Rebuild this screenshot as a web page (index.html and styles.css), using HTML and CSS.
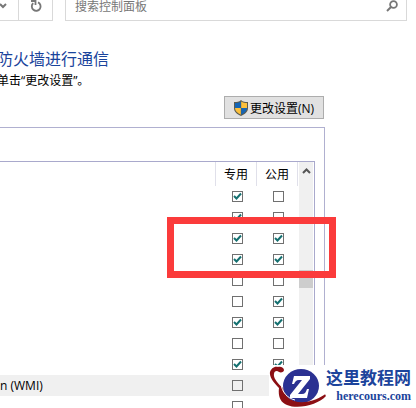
FILE: index.html
```html
<!DOCTYPE html>
<html lang="zh-CN">
<head>
<meta charset="UTF-8">
<title>允许应用通过防火墙进行通信</title>
<link rel="stylesheet" href="styles.css">
</head>
<body>
<header class="toolbar">
<div class="nav">
<button class="nav-btn drop" aria-label="历史">
<svg width="8" height="6" viewBox="0 0 8 6"><path d="M0 1l3 3 3-3" fill="none" stroke="#777" stroke-width="2"/></svg>
</button>
<button class="nav-btn refresh" aria-label="刷新">
<svg width="12" height="14" viewBox="0 0 12 14"><path d="M8 3.400A4.400 4.400 0 1 1 3.200 4.200M1 2h4.500v4" fill="none" stroke="#777" stroke-width="1.800"/></svg>
</button>
</div>
<div class="search">
<input type="text" placeholder="搜索控制面板" aria-label="搜索控制面板">
<svg width="12" height="12" viewBox="0 0 12 12"><circle cx="7.500" cy="4.500" r="3.400" fill="none" stroke="#777" stroke-width="1.800"/><path d="M5 7L1 11" stroke="#777" stroke-width="2"/></svg>
</div>
</header>
<main class="page">
<h1>防火墙进行通信</h1>
<p class="hint">单击“更改设置”。</p>
<div class="actions">
<button class="change-btn">
<svg width="14" height="16" viewBox="0 0 14 16">
<path d="M7 0C5 2 3 2 0 2v6c0 4 3 6 7 8 4-2 7-4 7-8V2C11 2 9 2 7 0z" fill="#5c5c50"/>
<path d="M6.800 1.500C5 3 3 3 1 3v5h5.800z" fill="#1565b4"/>
<path d="M7.200 1.500C9 3 11 3 13 3v5H7.200z" fill="#fcc03c"/>
<path d="M1 8h5.800v6.700C3 13 1 11 1 8z" fill="#fcc03c"/>
<path d="M13 8H7.200v6.700C11 13 13 11 13 8z" fill="#1565b4"/>
</svg>
<span>更改设置(N)</span>
</button>
</div>
<section class="panel">
<div class="list">
<table>
<thead>
<tr><th class="name"></th><th>专用</th><th>公用</th></tr>
</thead>
<tbody>
<tr><td></td><td><input type="checkbox" aria-label="专用" checked></td><td><input type="checkbox" aria-label="公用"></td></tr>
<tr><td></td><td><input type="checkbox" aria-label="专用" checked></td><td><input type="checkbox" aria-label="公用"></td></tr>
<tr><td></td><td><input type="checkbox" aria-label="专用" checked></td><td><input type="checkbox" aria-label="公用" checked></td></tr>
<tr><td></td><td><input type="checkbox" aria-label="专用" checked></td><td><input type="checkbox" aria-label="公用" checked></td></tr>
<tr><td></td><td><input type="checkbox" aria-label="专用"></td><td><input type="checkbox" aria-label="公用"></td></tr>
<tr><td></td><td><input type="checkbox" aria-label="专用"></td><td><input type="checkbox" aria-label="公用" checked></td></tr>
<tr><td></td><td><input type="checkbox" aria-label="专用" checked></td><td><input type="checkbox" aria-label="公用" checked></td></tr>
<tr><td></td><td><input type="checkbox" aria-label="专用"></td><td><input type="checkbox" aria-label="公用"></td></tr>
<tr><td></td><td><input type="checkbox" aria-label="专用" checked></td><td><input type="checkbox" aria-label="公用" checked></td></tr>
<tr class="selected"><td><label for="wmi">n (WMI)</label></td><td><input type="checkbox" id="wmi"></td><td><input type="checkbox" aria-label="公用"></td></tr>
<tr><td></td><td><input type="checkbox" aria-label="专用"></td><td><input type="checkbox" aria-label="公用"></td></tr>
</tbody>
</table>
<div class="scrollbar">
<svg width="9" height="6" viewBox="0 0 9 6"><path d="M1 5l3.500-3.500L8 5" fill="none" stroke="#555" stroke-width="2"/></svg>
<div class="thumb"></div>
</div>
</div>
<div class="mark"></div>
</section>
</main>
<footer class="logo">
<svg width="60" height="43" viewBox="0 0 60 43">
<ellipse cx="32" cy="21" rx="18" ry="17" fill="#2b3192"/>
<path d="M14 3C9 0 4 2 2 6c-2 6 4 12 9 17" fill="none" stroke="#fff" stroke-width="1"/>
<path d="M9 2C5 1 2 4 1 7c-1 6 5 12 9 16-1 8 1 14 8 17 12 5 32-1 39-9-1-1 0-2-2-1-9 6-21 9-30 6-6-2-10-7-11-13C9 19 4 13 5 9c0-3 3-4 5-2 2 1 5 0 5-2s-3-4-6-3z" fill="#8c0f14"/>
<path d="M12 19c1 8 6 14 14 16" fill="none" stroke="#fff" stroke-width="1"/>
<path d="M25 11h16v3L29 29h4c3 0 4-2 5-5h2l-2 9H21v-3l12-15h-3c-3 0-4 2-5 4h-2z" fill="#fff"/>
</svg>
<div class="logo-text">
<strong>这里教程网</strong>
<span>herecours.com</span>
</div>
</footer>
</body>
</html>
```

FILE: styles.css
```css
*{box-sizing:border-box;}
body{margin:0;height:100vh;overflow:hidden;position:relative;background:#fff;color:#000;
font-family:"Open Sans","Noto Sans CJK SC",sans-serif;font-size:12px;}
button,input{font:inherit;color:inherit;margin:0;}

.toolbar{display:flex;gap:12px;height:21px;padding-right:9px;}
.nav{display:flex;border-bottom:1px solid #d9d9d9;}
.nav-btn{display:flex;align-items:center;border:0;border-right:1px solid #d9d9d9;background:none;padding:0 0 8px;}
.drop{width:19px;}
.refresh{width:34px;justify-content:center;}
.search{flex:1;display:flex;align-items:flex-start;border:1px solid #d9d9d9;border-top:0;padding-right:8px;}
.search input{flex:1;min-width:0;height:12px;line-height:12px;border:0;padding:0 0 0 9px;background:none;outline:none;}
.search input::placeholder{color:#777;}

.page{padding-right:91px;}
h1{margin:26px 0 0 -3px;font-size:16px;line-height:24px;font-weight:400;color:#1a449c;}
.hint{margin:0 0 0 -3px;line-height:20px;}
.actions{display:flex;justify-content:flex-end;margin-top:5px;padding-right:1px;}
.change-btn{display:flex;align-items:center;justify-content:center;gap:2px;width:100px;height:23px;
padding:0;border:1px solid #adadad;background:#e1e1e1;white-space:nowrap;}

.panel{position:relative;margin-top:8px;padding:33px 9px 20px 0;border:1px solid #b0b0d0;border-left:0;}
.list{display:flex;border:1px solid #a9a9cc;border-left:0;}
table{flex:1;table-layout:fixed;border-collapse:collapse;}
th{width:41px;height:24px;padding:0;font-weight:400;border-right:1px solid #e0e0ea;}
th.name{width:auto;}
td{height:21px;padding:0 0 0 2px;line-height:20px;text-align:center;}
td:first-child{padding:0;text-align:left;}
.selected{background:#f0f0f0;}
td input{appearance:none;display:block;width:11px;height:11px;margin:0 auto;border:1px solid #707070;
background:transparent center no-repeat;}
td input:checked{background-image:url("data:image/svg+xml,%3Csvg xmlns='http://www.w3.org/2000/svg' width='9' height='9'%3E%3Cpath d='M1 4l2.500 2.500L8 1.500' fill='none' stroke='%23147070' stroke-width='2'/%3E%3C/svg%3E");}

.scrollbar{width:15px;margin-left:1px;background:#f0f0f0;border-right:1px solid #fff;text-align:center;line-height:16px;}
.thumb{height:18px;margin-top:92px;background:#cdcdcd;}
.mark{position:absolute;top:89px;right:-12px;width:169px;height:61px;border:7px solid #fb3b3b;}

.logo{position:absolute;right:0;bottom:0;display:flex;width:147px;height:43px;background:#fff;}
.logo-text{display:flex;flex-direction:column;align-items:flex-end;margin-left:-3px;color:#1c449c;white-space:nowrap;}
.logo-text strong{font-family:"Noto Sans CJK SC",sans-serif;font-size:17px;line-height:24px;}
.logo-text span{font-family:"Liberation Serif",serif;font-weight:700;font-size:12px;line-height:14px;}
```
